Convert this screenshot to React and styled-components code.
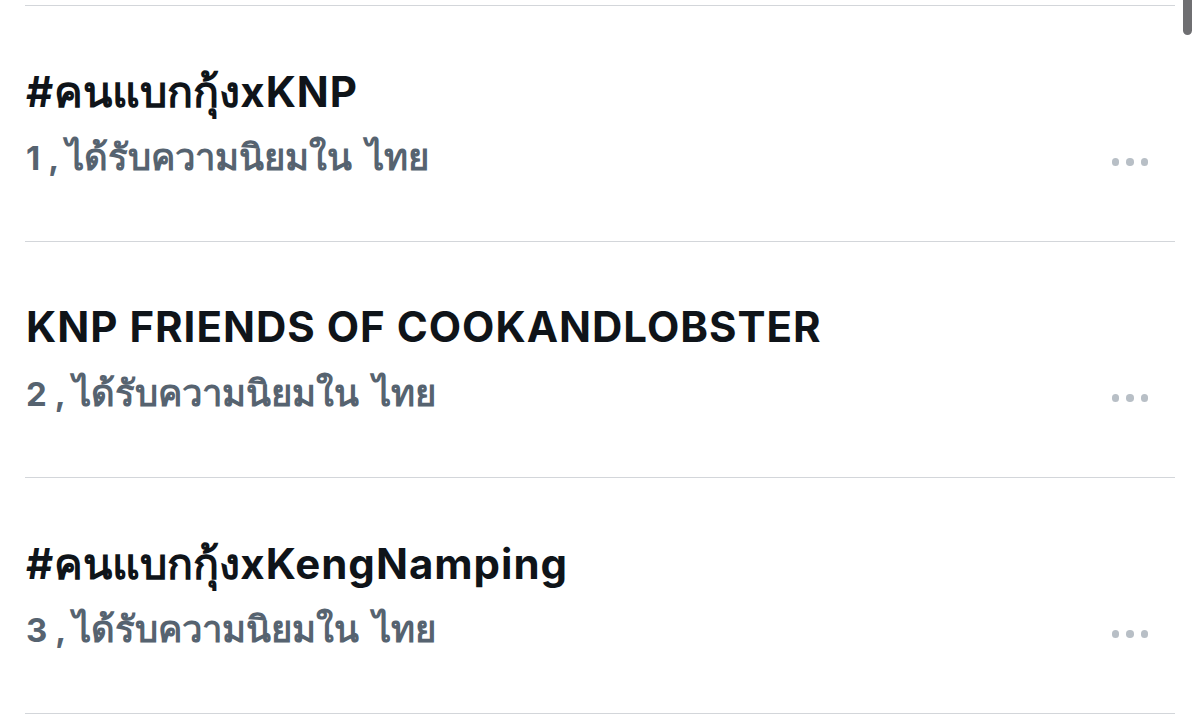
import React from 'react';
import styled, { createGlobalStyle } from 'styled-components';

const GlobalStyle = createGlobalStyle`
  html, body {
    margin: 0;
    padding: 0;
    background: #ffffff;
    overflow: hidden;
  }
  body {
    font-family: Inter, "Liberation Sans", "Noto Sans", sans-serif;
  }
`;

const TRENDS = [
  { rank: 1, title: '#คนแบกกุ้งxKNP' },
  { rank: 2, title: 'KNP FRIENDS OF COOKANDLOBSTER' },
  { rank: 3, title: '#คนแบกกุ้งxKengNamping' },
];

const Page = styled.div`
  position: relative;
  width: 1200px;
  height: 725px;
  overflow: hidden;
`;

const List = styled.div`
  display: flex;
  flex-direction: column;
  margin: 5px 25px 0 25px;
  border-top: 1px solid #d3d6da;
`;

const TrendRow = styled.div`
  display: flex;
  align-items: flex-start;
  height: 236px;
  padding: 64px 0 0 1px;
  box-sizing: border-box;
  border-bottom: 1px solid #d3d6da;
`;

const TrendText = styled.div`
  flex: 1;
  display: flex;
  flex-direction: column;
`;

const Title = styled.div`
  font-size: 42px;
  font-weight: 700;
  line-height: 42px;
  height: 42px;
  color: #0f1419;
  letter-spacing: 1px;
  white-space: nowrap;
`;

const Meta = styled.div`
  margin-top: 25px;
  font-size: 33px;
  font-weight: 700;
  line-height: 40px;
  height: 40px;
  color: #566370;
  white-space: nowrap;
`;

// Thai glyphs in the fallback face run small next to the Latin ones
const Thai = styled.span`
  font-size: ${p => p.$size}px;
  letter-spacing: 0;
`;

const WordGap = styled.span`
  display: inline-block;
  width: 14px;
`;

const Rank = styled.span`
  margin-right: 8px;
`;

const MoreButton = styled.div`
  display: flex;
  gap: 7px;
  margin-top: 88px;
  margin-right: 27px;
`;

const Dot = styled.span`
  width: 7.5px;
  height: 7.5px;
  border-radius: 50%;
  background: #b8bfc6;
`;

const ScrollThumb = styled.div`
  position: absolute;
  top: -8px;
  right: 8px;
  width: 9px;
  height: 43px;
  border-radius: 5px;
  background: #6f6f72;
`;

const withThai = (text, size) =>
  text.split(/([\u0E00-\u0E7F]+)/).map((part, i) =>
    /[\u0E00-\u0E7F]/.test(part)
      ? <Thai key={i} $size={size}>{part}</Thai>
      : part
  );

export default function App() {
  return (
    <Page>
      <GlobalStyle />
      <List>
        {TRENDS.map(t => (
          <TrendRow key={t.rank}>
            <TrendText>
              <Title>{withThai(t.title, 43)}</Title>
              <Meta>
                <Rank>{t.rank}</Rank>,{' '}
                <Thai $size={36.5}>ได้รับความนิยมใน</Thai>
                <WordGap />
                <Thai $size={36.5}>ไทย</Thai>
              </Meta>
            </TrendText>
            <MoreButton>
              <Dot />
              <Dot />
              <Dot />
            </MoreButton>
          </TrendRow>
        ))}
      </List>
      <ScrollThumb />
    </Page>
  );
}
